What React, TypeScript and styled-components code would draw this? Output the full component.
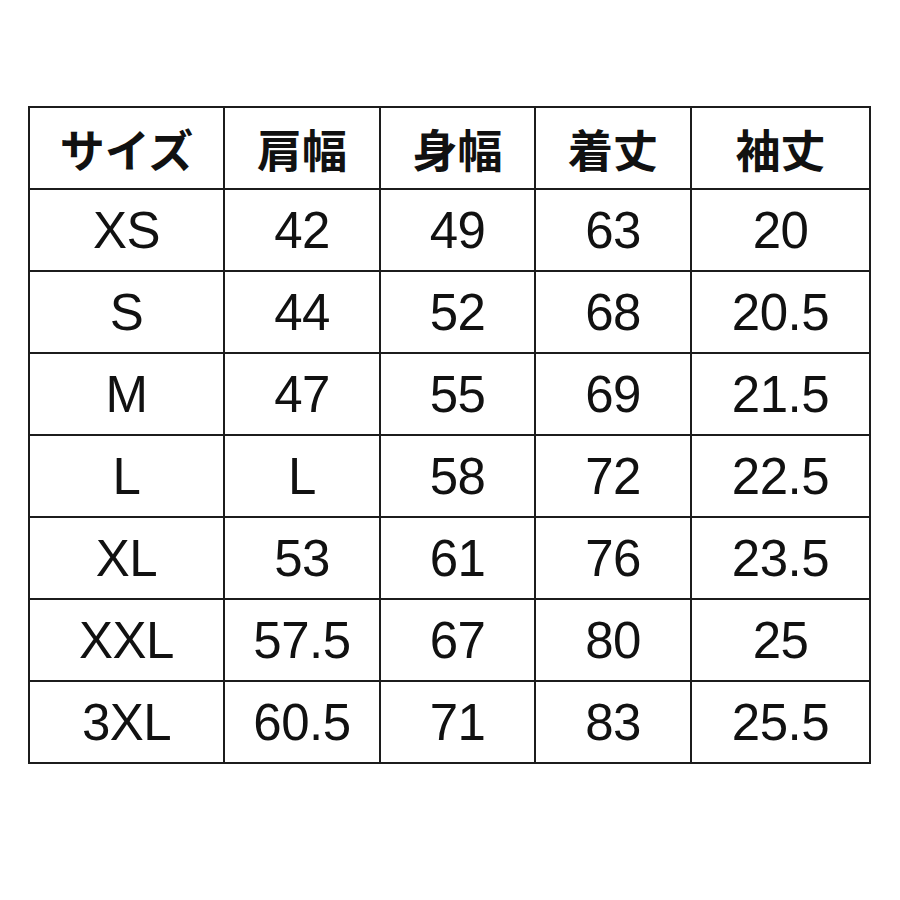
import React from "react";
import styled, { createGlobalStyle } from "styled-components";

const GlobalStyle = createGlobalStyle`
  html, body {
    margin: 0;
    padding: 0;
    background: #ffffff;
  }
`;

const Page = styled.div`
  width: 900px;
  height: 900px;
  padding: 106px 0 0 28px;
  box-sizing: border-box;
  background: #fff;
`;

const Table = styled.table`
  border-collapse: collapse;
  table-layout: fixed;
  width: 843px;
  border: 2px solid #1c1c1c;
`;

const Cell = styled.td<{ $head?: boolean }>`
  height: 80px;
  padding: 0;
  border: 2px solid #1c1c1c;
  text-align: center;
  vertical-align: middle;
  color: #111;
  font-family: ${(p) =>
    p.$head
      ? `"Noto Sans CJK JP", "Noto Sans", sans-serif`
      : `"Liberation Sans", Arial, sans-serif`};
  font-size: ${(p) => (p.$head ? "45px" : "51px")};
  font-weight: ${(p) => (p.$head ? 700 : 400)};
  line-height: 1;
  letter-spacing: ${(p) => (p.$head ? "0" : "-0.5px")};
`;

const widths = [195, 156, 155, 156, 179];
const head = ["サイズ", "肩幅", "身幅", "着丈", "袖丈"];
const rows = [
  ["XS", "42", "49", "63", "20"],
  ["S", "44", "52", "68", "20.5"],
  ["M", "47", "55", "69", "21.5"],
  ["L", "L", "58", "72", "22.5"],
  ["XL", "53", "61", "76", "23.5"],
  ["XXL", "57.5", "67", "80", "25"],
  ["3XL", "60.5", "71", "83", "25.5"],
];

export default function App() {
  return (
    <>
      <GlobalStyle />
      <Page>
        <Table>
          <colgroup>
            {widths.map((w, i) => (
              <col key={i} style={{ width: w }} />
            ))}
          </colgroup>
          <tbody>
            <tr>
              {head.map((h) => (
                <Cell key={h} $head>
                  {h}
                </Cell>
              ))}
            </tr>
            {rows.map((r, i) => (
              <tr key={i}>
                {r.map((c, j) => (
                  <Cell key={j}>{c}</Cell>
                ))}
              </tr>
            ))}
          </tbody>
        </Table>
      </Page>
    </>
  );
}
